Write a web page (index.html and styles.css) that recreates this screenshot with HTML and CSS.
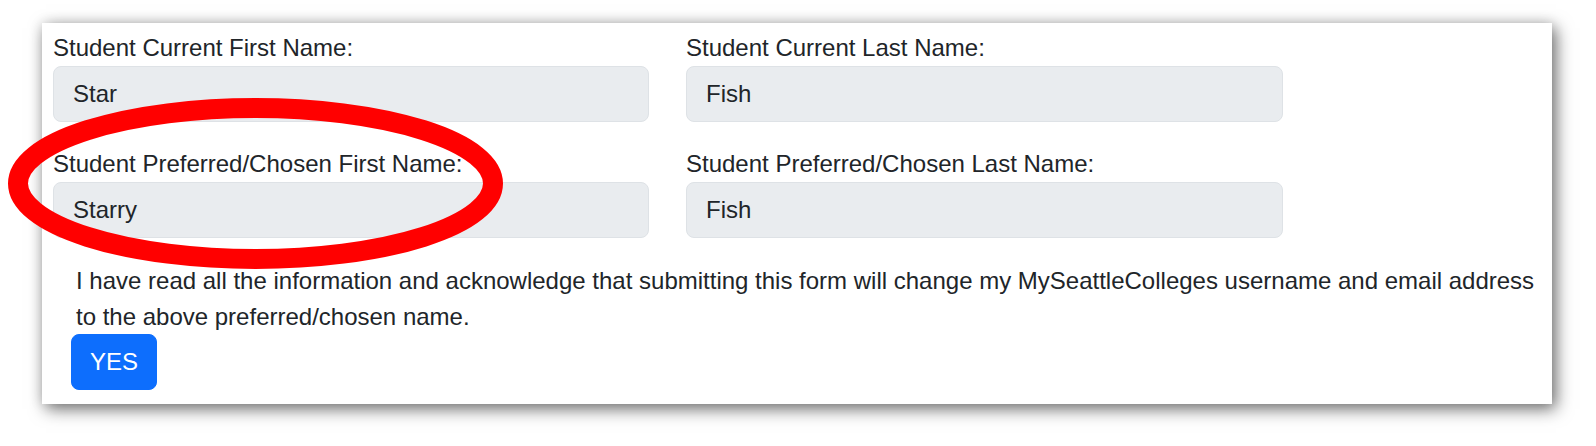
FILE: index.html
```html
<!DOCTYPE html>
<html lang="en">
<head>
<meta charset="utf-8">
<title>Preferred Name</title>
<link rel="stylesheet" href="styles.css">
</head>
<body>
<div class="page">
  <form class="card">
    <div class="fields">
      <div class="field">
        <label class="label" for="cf">Student Current First Name:</label>
        <input class="control" id="cf" type="text" value="Star" readonly>
      </div>
      <div class="field">
        <label class="label" for="cl">Student Current Last Name:</label>
        <input class="control" id="cl" type="text" value="Fish" readonly>
      </div>
      <div class="field">
        <label class="label" for="pf">Student Preferred/Chosen First Name:</label>
        <input class="control" id="pf" type="text" value="Starry" readonly>
      </div>
      <div class="field">
        <label class="label" for="pl">Student Preferred/Chosen Last Name:</label>
        <input class="control" id="pl" type="text" value="Fish" readonly>
      </div>
    </div>
    <p class="ack">I have read all the information and acknowledge that submitting this form will change my MySeattleColleges username and email address to the above preferred/chosen name.</p>
    <button class="btn" type="button">YES</button>
  </form>
  <svg class="circle" width="520" height="290" viewBox="0 0 520 290" aria-hidden="true">
    <ellipse cx="255.5" cy="183.5" rx="237.5" ry="75.5" fill="none" stroke="#ff0000" stroke-width="20"/>
  </svg>
</div>
</body>
</html>
```

FILE: styles.css
```css
* { box-sizing: border-box; }

html, body {
  margin: 0;
  padding: 0;
  background: #ffffff;
}

body {
  font-family: "Liberation Sans", Arial, sans-serif;
  font-size: 24px;
  line-height: 36px;
  color: #212529;
}

.page {
  position: relative;
  width: 1596px;
  height: 446px;
  padding: 23px 0 0 42px;
}

.card {
  width: 1510px;
  background: #ffffff;
  padding: 7px 8px 14px 11px;
  box-shadow: 4px 5px 16px rgba(0, 0, 0, 0.55), 0 0 12px rgba(0, 0, 0, 0.12);
  display: flex;
  flex-direction: column;
  align-items: flex-start;
}

.fields {
  display: grid;
  grid-template-columns: 596px 597px;
  column-gap: 37px;
  row-gap: 24px;
}

.field {
  display: flex;
  flex-direction: column;
}

.label {
  display: block;
  font-size: 24px;
  line-height: 36px;
}

.control {
  display: block;
  width: 100%;
  height: 56px;
  margin: 0;
  padding: 0 19px;
  font-family: inherit;
  font-size: 24px;
  color: #212529;
  background: #e9ecef;
  border: 1px solid #dee2e6;
  border-radius: 8px;
  outline: none;
}

.ack {
  margin: 25px 0 0 0;
  padding-left: 23px;
  font-size: 24px;
  line-height: 36px;
}

.btn {
  margin: -1px 0 0 18px;
  height: 56px;
  padding: 0 18px;
  font-family: inherit;
  font-size: 24px;
  color: #ffffff;
  background: #0d6efd;
  border: 1px solid #0d6efd;
  border-radius: 8px;
}

.circle {
  position: absolute;
  left: 0;
  top: 0;
  pointer-events: none;
}
```
